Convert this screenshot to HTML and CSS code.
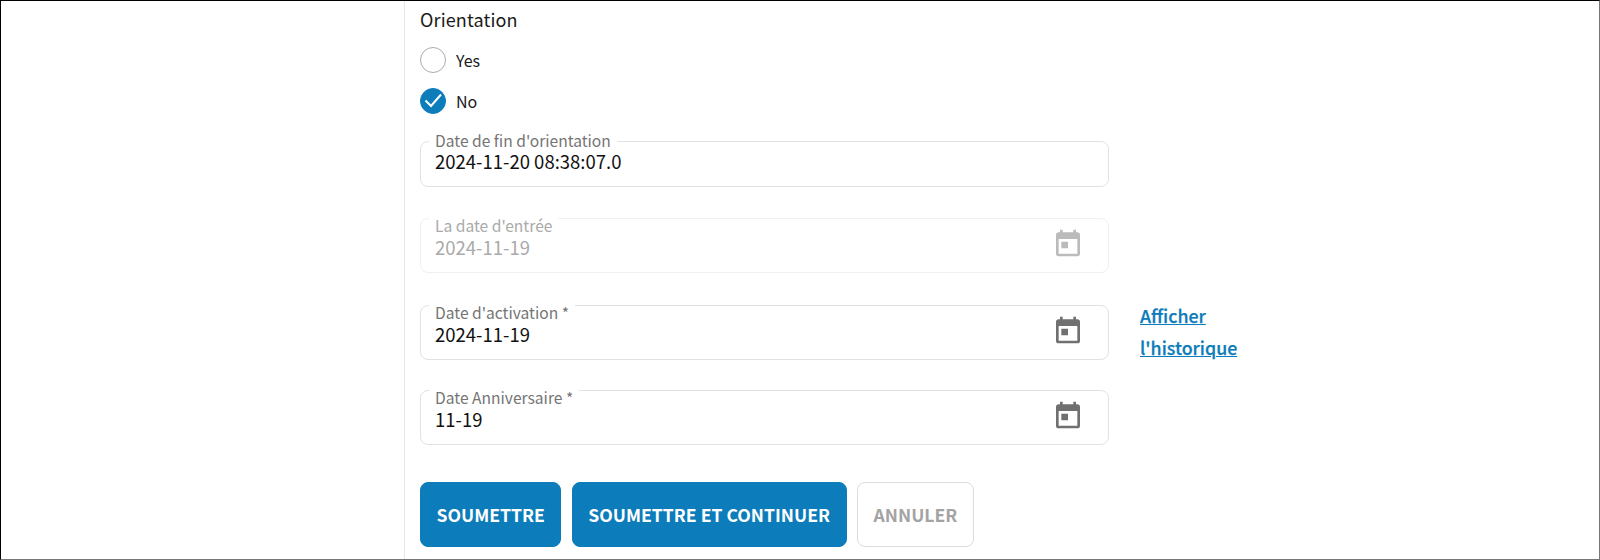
FILE: index.html
```html
<!DOCTYPE html>
<html lang="fr">
<head>
<meta charset="utf-8">
<title>Orientation</title>
<link rel="stylesheet" href="styles.css">
</head>
<body>
<div class="frame">
  <main class="column">
    <div class="group-label">Orientation</div>
    <label class="choice">
      <span class="radio"></span>
      <span class="choice-text">Yes</span>
    </label>
    <label class="choice">
      <span class="radio radio-on">
        <svg viewBox="0 0 26 26" width="26" height="26"><path d="M5.5 12.5L11 18 21 6.5" fill="none" stroke="#fff" stroke-width="2"/></svg>
      </span>
      <span class="choice-text">No</span>
    </label>

    <div class="field field-short">
      <span class="legend">Date de fin d'orientation</span>
      <span class="value">2024-11-20 08:38:07.0</span>
    </div>

    <div class="row">
      <div class="field is-disabled">
        <span class="legend">La date d'entrée</span>
        <span class="value">2024-11-19</span>
        <svg class="cal" viewBox="0 0 24 24" width="32" height="32"><path d="M19 4h-1V2h-2v2H8V2H6v2H5a2 2 0 0 0-2 2v14a2 2 0 0 0 2 2h14a2 2 0 0 0 2-2V6a2 2 0 0 0-2-2zm0 16H5V9h14v11zM7 11h5v5H7z"/></svg>
      </div>
    </div>

    <div class="row row-history">
      <div class="field">
        <span class="legend">Date d'activation *</span>
        <span class="value">2024-11-19</span>
        <svg class="cal" viewBox="0 0 24 24" width="32" height="32"><path d="M19 4h-1V2h-2v2H8V2H6v2H5a2 2 0 0 0-2 2v14a2 2 0 0 0 2 2h14a2 2 0 0 0 2-2V6a2 2 0 0 0-2-2zm0 16H5V9h14v11zM7 11h5v5H7z"/></svg>
      </div>
      <a class="history" href="#">Afficher<br>l'historique</a>
    </div>

    <div class="row row-last">
      <div class="field">
        <span class="legend">Date Anniversaire *</span>
        <span class="value">11-19</span>
        <svg class="cal" viewBox="0 0 24 24" width="32" height="32"><path d="M19 4h-1V2h-2v2H8V2H6v2H5a2 2 0 0 0-2 2v14a2 2 0 0 0 2 2h14a2 2 0 0 0 2-2V6a2 2 0 0 0-2-2zm0 16H5V9h14v11zM7 11h5v5H7z"/></svg>
      </div>
    </div>

    <div class="actions">
      <button class="btn btn-primary" type="button">SOUMETTRE</button>
      <button class="btn btn-primary" type="button">SOUMETTRE ET CONTINUER</button>
      <button class="btn btn-ghost" type="button">ANNULER</button>
    </div>
  </main>
</div>
</body>
</html>
```

FILE: styles.css
```css
* { box-sizing: border-box; }
html, body { margin: 0; height: 100%; background: #fff; }
body { font-family: "Noto Sans CJK SC", "Noto Sans", sans-serif; color: #1a1a1a; }

.frame {
  width: 1600px;
  height: 560px;
  overflow: hidden;
  padding-left: 403px;
  border-top: 1px solid #000;
  border-left: 1px solid #000;
  border-right: 1px solid #777;
  border-bottom: 1px solid #777;
}
.column {
  height: 100%;
  padding: 5px 0 0 15px;
  border-left: 1px solid #e6e6e6;
}
.group-label { font-size: 18px; line-height: 26px; height: 41px; letter-spacing: .15px; }

.choice { display: flex; align-items: center; gap: 10px; height: 26px; margin-bottom: 15px; }
.radio {
  width: 26px; height: 26px; border-radius: 50%;
  border: 1px solid #aaa; display: block; flex: none;
}
.radio-on { background: #0c7cba; border-color: #0c7cba; position: relative; }
.radio-on svg { position: absolute; left: -1px; top: -1px; display: block; }
.choice-text { font-size: 16px; line-height: 26px; }

.field {
  position: relative;
  width: 689px;
  height: 55px;
  border: 1px solid #e2e2e2;
  border-radius: 8px;
  padding: 16px 14px 0;
}
.field-short { height: 46px; margin-top: 27px; margin-bottom: 31px; padding-top: 7px; }
.legend {
  position: absolute;
  left: 8px;
  top: -4px;
  padding: 0 6px;
  background: #fff;
  font-size: 15.6px;
  line-height: 20px;
  color: #757575;
}
.field-short .legend { top: -12px; }
.value { display: block; font-size: 18.5px; line-height: 24px; color: #111; }
.cal { position: absolute; right: 24px; top: 8px; fill: #707070; }

.row { display: flex; align-items: flex-start; gap: 31px; height: 55px; margin-bottom: 32px; }
.row-history { margin-bottom: 30px; }
.row-last { margin-bottom: 37px; }
.is-disabled { border-color: #f0f0f0; }
.is-disabled .legend, .is-disabled .value { color: #aaa; }
.is-disabled .cal { fill: #bbb; }

.history {
  font-size: 17.8px; font-weight: 500; line-height: 32px;
  color: #0c7cba; text-decoration: underline; margin-top: -6px;
  -webkit-text-stroke: .25px #0c7cba;
}
.actions { display: flex; gap: 10.5px; }
.btn {
  height: 65px; border-radius: 8px; padding: 0 15.5px;
  font-family: inherit; font-size: 17.6px; font-weight: 700;
}
.btn-primary { background: #0c7cba; border: 1px solid #0c7cba; color: #fff; }
.btn-ghost { background: #fff; border: 1px solid #ddd; color: #a3a3a3; }
```
